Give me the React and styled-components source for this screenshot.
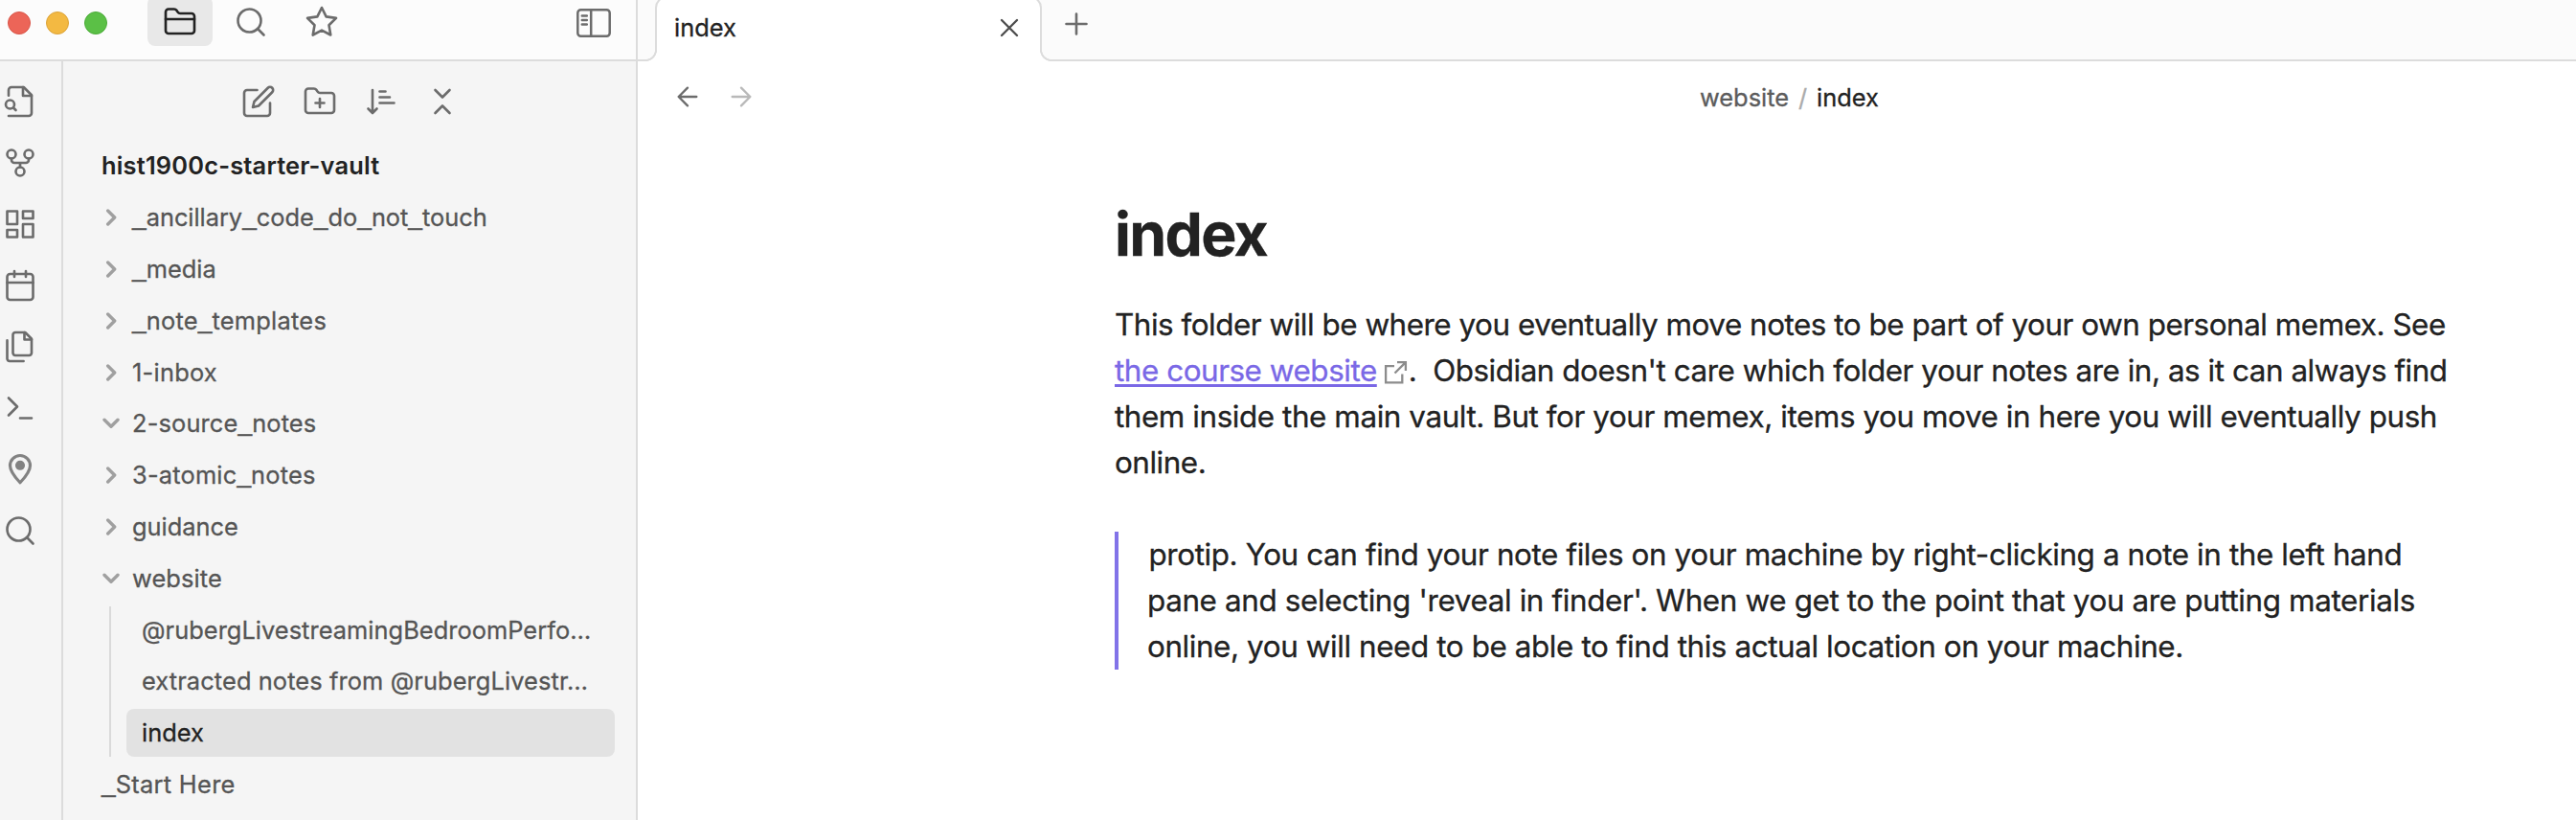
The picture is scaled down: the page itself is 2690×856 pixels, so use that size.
import React from "react";
import styled, { createGlobalStyle, css } from "styled-components";

const Global = createGlobalStyle`
  * { box-sizing: border-box; }
  body {
    margin: 0;
    overflow: hidden;
    background: #ffffff;
    color: #222222;
    font-family: Inter, "Liberation Sans", sans-serif;
    font-weight: 400;
    -webkit-font-smoothing: antialiased;
    -webkit-text-stroke: 0.3px currentColor;
  }
`;

const line = "#dcdcdc";

const Window = styled.div`
  display: flex;
  width: 2690px;
  height: 856px;
  overflow: hidden;
`;

const LeftDock = styled.section`
  display: flex;
  flex-direction: column;
  flex: none;
  width: 666px;
  border-right: 2px solid ${line};
  background: #f5f5f5;
`;

const TitleBar = styled.header`
  display: flex;
  flex: none;
  height: 64px;
  padding: 0 26px 0 8px;
  border-bottom: 2px solid ${line};
  background: #fcfcfc;
`;

const Lights = styled.div`
  display: flex;
  gap: 16px;
  margin: 12px 42px 0 0;
`;

const Light = styled.span`
  width: 24px;
  height: 24px;
  border: 1px solid ${(p) => p.$ring};
  border-radius: 50%;
  background: ${(p) => p.$fill};
`;

const DockTabs = styled.nav`
  display: flex;
  flex: 1;
  gap: 6px;
`;

const DockTab = styled.button`
  display: flex;
  align-items: center;
  justify-content: center;
  width: 68px;
  height: 52px;
  margin-top: -4px;
  padding: 2px 0 0;
  border: 0;
  border-radius: 8px;
  background: ${(p) => (p.$active ? "#e8e8e8" : "transparent")};
  color: ${(p) => (p.$active ? "#222222" : "#6c6c6c")};
`;

const ToggleButton = styled.button`
  display: flex;
  height: 30px;
  margin-top: 9px;
  padding: 0;
  border: 0;
  background: none;
  color: #6c6c6c;
`;

const DockBody = styled.div`
  display: flex;
  flex: 1;
  min-height: 0;
`;

const Ribbon = styled.aside`
  display: flex;
  flex-direction: column;
  gap: 28px;
  width: 66px;
  padding: 24px 0 0 3px;
  border-right: 2px solid ${line};
  color: #6c6c6c;
`;

const Explorer = styled.div`
  flex: 1;
  min-width: 0;
  padding-right: 22px;
`;

const ExplorerTools = styled.div`
  display: flex;
  gap: 28px;
  height: 36px;
  margin: 24px 0 22.6px 186px;
  color: #6c6c6c;
`;

const Row = styled.div`
  display: flex;
  align-items: center;
  height: 53.8px;
  padding-left: ${(p) => (p.$leaf ? 40 : 41)}px;
  font-size: 25.4px;
  line-height: 34px;
  white-space: nowrap;
  color: #555555;
`;

const VaultName = styled(Row)`
  color: #222222;
  font-weight: 600;
  -webkit-text-stroke: 0;
`;

const Chevron = styled.svg`
  flex: none;
  width: 18px;
  height: 18px;
  margin-right: 13px;
  fill: none;
  stroke: #a0a0a0;
  stroke-width: 3.4;
  stroke-linecap: round;
  stroke-linejoin: round;
`;

const Track = styled.span`
  letter-spacing: ${(p) => p.$track || 0}px;
`;

const Underscore = styled.span`
  font-family: "Liberation Sans", sans-serif;
  font-size: 26.4px;
  line-height: 1;
  letter-spacing: 0;
  vertical-align: 1px;
`;

const Children = styled.div`
  margin: 1.9px 0 1.9px 48px;
  padding-left: 16px;
  border-left: 2px solid #dadada;
`;

const FileRow = styled.div`
  display: flex;
  align-items: center;
  height: 50px;
  margin-bottom: 3.8px;
  padding-left: 16px;
  border-radius: 8px;
  font-size: 25.4px;
  line-height: 34px;
  white-space: nowrap;
  color: #555555;
  ${(p) =>
    p.$selected &&
    css`
      margin-bottom: 0;
      background: #e2e2e2;
      color: #222222;
    `}
`;

const Main = styled.main`
  flex: 1;
  min-width: 0;
`;

const TabBar = styled.div`
  display: flex;
  height: 64px;
  padding-left: 18px;
  border-bottom: 2px solid ${line};
  background: #fbfbfb;
`;

const Tab = styled.div`
  position: relative;
  display: flex;
  align-items: center;
  justify-content: space-between;
  width: 404px;
  height: 68px;
  margin-top: -4px;
  padding: 0 16px 5px 18px;
  border: 2px solid ${line};
  border-bottom: 0;
  border-radius: 12px 12px 0 0;
  background: #ffffff;
  font-size: 25.4px;
  color: #222222;
`;

const TabCurve = styled.span`
  position: absolute;
  bottom: 0;
  ${(p) => p.$side}: -12px;
  width: 12px;
  height: 12px;
  background: radial-gradient(
    circle at ${(p) => (p.$side === "left" ? "0" : "100%")} 0,
    #fbfbfb 9.6px, ${line} 10.2px, ${line} 11.7px, #ffffff 12.3px
  );
`;

const NewTab = styled.button`
  display: flex;
  margin: 7px 0 0 18px;
  padding: 0;
  border: 0;
  background: none;
  color: #6c6c6c;
  align-self: flex-start;
`;

const CloseButton = styled.button`
  display: flex;
  padding: 0;
  border: 0;
  background: none;
  color: #4d4d4d;
`;

const ViewHeader = styled.div`
  display: flex;
  align-items: center;
  height: 74px;
  padding-left: 36px;
`;

const NavArrow = styled.button`
  display: flex;
  margin-right: 24px;
  padding: 0;
  border: 0;
  background: none;
  color: ${(p) => (p.$off ? "#b9b9b9" : "#6c6c6c")};
`;

const Crumbs = styled.div`
  display: flex;
  margin-left: 961px;
  font-size: 25.4px;
  color: #5c5c5c;
`;

const Slash = styled.span`
  width: 29px;
  text-align: center;
  color: #ababab;
`;

const Current = styled.span`
  color: #222222;
`;

const Article = styled.article`
  width: 1920px;
  padding: 68px 0 0 498px;
`;

const Title = styled.h1`
  margin: 0;
  font-size: 62.5px;
  line-height: 77px;
  font-weight: 700;
  letter-spacing: -1.7px;
`;

const Paragraph = styled.p`
  margin: 32px 0 0;
  font-size: 31.4px;
  line-height: 48px;
`;

const Line = styled.span`
  display: block;
  white-space: pre;
  letter-spacing: ${(p) => p.$track || 0}px;
  text-indent: ${(p) => p.$indent || 0}px;
`;

const Link = styled.a`
  color: #7a68e6;
  text-decoration: underline;
  text-decoration-thickness: 3px;
  text-underline-offset: 3px;
  text-decoration-skip-ink: none;
`;

const LinkIcon = styled.svg`
  width: 25px;
  height: 25px;
  margin: 0 1px 0 7px;
  vertical-align: -3px;
  fill: none;
  stroke: #8c8c8c;
  stroke-width: 2.3;
`;

const Quote = styled.blockquote`
  margin: 48px 0 0;
  padding-left: 30px;
  border-left: 4px solid #8273e8;
  font-size: 31.4px;
  line-height: 48px;
`;

const Svg = styled.svg`
  flex: none;
  display: block;
  fill: none;
  stroke: currentColor;
  stroke-width: ${(p) => p.$stroke || 1.75};
  stroke-linecap: round;
  stroke-linejoin: round;
`;

function Icon({ size = 36, children }) {
  return (
    <Svg width={size} height={size} viewBox="0 0 24 24" aria-hidden="true">
      {children}
    </Svg>
  );
}

const SearchIcon = () => (
  <Icon>
    <circle cx="11" cy="11" r="8" />
    <path d="m21 21-4.3-4.3" />
  </Icon>
);

const folder =
  "M4 20h16a2 2 0 0 0 2-2V8a2 2 0 0 0-2-2h-7.93a2 2 0 0 1-1.66-.9l-.82-1.2A2 2 0 0 0 7.93 3H4a2 2 0 0 0-2 2v13c0 1.1.9 2 2 2Z";

function Label({ text, track }) {
  return (
    <Track $track={track}>
      {text.split(/(_)/).map((part, i) => (part === "_" ? <Underscore key={i}>_</Underscore> : part))}
    </Track>
  );
}

function Folder({ name, open, track }) {
  return (
    <Row>
      <Chevron viewBox="0 0 18 18">
        <path d={open ? "M2 5.3 9 12.3 16 5.3" : "M5.7 2 12.7 9 5.7 16"} />
      </Chevron>
      <Label text={name} track={track} />
    </Row>
  );
}

const folders = [
  { name: "_ancillary_code_do_not_touch", track: -0.03 },
  { name: "_media" },
  { name: "_note_templates", track: 0.25 },
  { name: "1-inbox", track: 0.25 },
  { name: "2-source_notes", open: true, track: 0.15 },
  { name: "3-atomic_notes", track: 0.2 },
  { name: "guidance" },
  { name: "website", open: true, track: 0.1 },
];

export default function App() {
  return (
    <Window>
      <Global />
      <LeftDock>
        <TitleBar>
          <Lights>
            <Light $fill="#ec6558" $ring="#d95548" />
            <Light $fill="#f3b942" $ring="#dca338" />
            <Light $fill="#5bc046" $ring="#4bab38" />
          </Lights>
          <DockTabs>
            <DockTab $active aria-label="Files">
              <Icon>
                <path d={folder} />
                <path d="M2 10h20" />
              </Icon>
            </DockTab>
            <DockTab aria-label="Search">
              <SearchIcon />
            </DockTab>
            <DockTab aria-label="Starred">
              <Icon>
                <path d="m12 2 3.09 6.26L22 9.27l-5 4.87 1.18 6.88L12 17.77l-6.18 3.25L7 14.14 2 9.27l6.91-1.01z" />
              </Icon>
            </DockTab>
          </DockTabs>
          <ToggleButton aria-label="Toggle sidebar">
            <Svg $stroke={2.5} width="36" height="30" viewBox="0 0 36 30">
              <rect x="1.3" y="1.3" width="33.4" height="27.4" rx="3.2" />
              <path d="M15.2 1.5v27M5.8 7.4h5M5.8 12h5M5.8 16.4h5" />
            </Svg>
          </ToggleButton>
        </TitleBar>
        <DockBody>
          <Ribbon>
            <Icon>
              <path d="M4 7.8V4a2 2 0 0 1 2-2h8.5L20 7.5V20a2 2 0 0 1-2 2H4" />
              <path d="M14 2v6h6" />
              <circle cx="5" cy="14" r="3" />
              <path d="m9 18-1.5-1.5" />
            </Icon>
            <Icon>
              <circle cx="12" cy="18" r="3" />
              <circle cx="6" cy="6" r="3" />
              <circle cx="18" cy="6" r="3" />
              <path d="M18 9v1a2 2 0 0 1-2 2H8a2 2 0 0 1-2-2V9M12 12v3" />
            </Icon>
            <Icon>
              <path d="M3 3h7v9H3zM14 3h7v5h-7zM14 12h7v9h-7zM3 16h7v5H3z" />
            </Icon>
            <Icon>
              <rect x="3" y="4" width="18" height="18" rx="2" />
              <path d="M16 2v4M8 2v4M3 10h18" />
            </Icon>
            <Icon>
              <path d="M15.5 2H8.6c-.4 0-.8.2-1.1.5-.3.3-.5.7-.5 1.1v12.8c0 .4.2.8.5 1.1.3.3.7.5 1.1.5h9.8c.4 0 .8-.2 1.1-.5.3-.3.5-.7.5-1.1V6.5L15.5 2z" />
              <path d="M3 7.6v12.8c0 .4.2.8.5 1.1.3.3.7.5 1.1.5h9.8M15 2v5h5" />
            </Icon>
            <Icon>
              <path d="m4 17 6-6-6-6M12 19h8" />
            </Icon>
            <Icon>
              <g stroke="#828282">
                <path
                  strokeWidth="2.1"
                  d="M12 21.2C9.2 18.2 5 13.8 5 9.3a7 7 0 0 1 14 0c0 4.5-4.2 8.9-7 11.9z"
                />
                <circle cx="12" cy="9.2" r="2.5" fill="#828282" />
              </g>
            </Icon>
            <SearchIcon />
          </Ribbon>
          <Explorer>
            <ExplorerTools>
              <Icon>
                <path d="M11 4H4a2 2 0 0 0-2 2v14a2 2 0 0 0 2 2h14a2 2 0 0 0 2-2v-7" />
                <path d="M18.5 2.5a2.12 2.12 0 0 1 3 3L12 15l-4 1 1-4Z" />
              </Icon>
              <Icon>
                <path d={folder} />
                <path d="M12 10v6M9 13h6" />
              </Icon>
              <Icon>
                <path d="M11 5h4M11 9h7M11 13h10M3 17l3 3 3-3M6 18V4" />
              </Icon>
              <Icon>
                <path d="m7 20 5-5 5 5M7 4l5 5 5-5" />
              </Icon>
            </ExplorerTools>
            <VaultName $leaf>
              <Label text="hist1900c-starter-vault" track={0.2} />
            </VaultName>
            {folders.map((f) => (
              <Folder key={f.name} {...f} />
            ))}
            <Children>
              <FileRow>
                <Label text="@rubergLivestreamingBedroomPerfo…" track={0.04} />
              </FileRow>
              <FileRow>
                <Label text="extracted notes from @rubergLivestr…" track={0.1} />
              </FileRow>
              <FileRow $selected>
                <Label text="index" />
              </FileRow>
            </Children>
            <Row $leaf>
              <Label text="_Start Here" track={0.3} />
            </Row>
          </Explorer>
        </DockBody>
      </LeftDock>
      <Main>
        <TabBar>
          <Tab>
            <TabCurve $side="left" />
            <Track>index</Track>
            <CloseButton aria-label="Close tab">
              <Icon size={32}>
                <path d="M18 6 6 18M6 6l12 12" />
              </Icon>
            </CloseButton>
            <TabCurve $side="right" />
          </Tab>
          <NewTab aria-label="New tab">
            <Icon>
              <path d="M12 5v14M5 12h14" />
            </Icon>
          </NewTab>
        </TabBar>
        <ViewHeader>
          <NavArrow aria-label="Back">
            <Icon size={32}>
              <path d="m12 19-7-7 7-7M19 12H5" />
            </Icon>
          </NavArrow>
          <NavArrow $off aria-label="Forward">
            <Icon size={32}>
              <path d="m12 5 7 7-7 7M5 12h14" />
            </Icon>
          </NavArrow>
          <Crumbs>
            <Track>website</Track>
            <Slash>/</Slash>
            <Current>index</Current>
          </Crumbs>
        </ViewHeader>
        <Article>
          <Title>index</Title>
          <Paragraph>
            <Line $track={-0.47}>
              This folder will be where you eventually move notes to be part of your own personal memex. See
            </Line>
            <Line $track={-0.45}>
              <Link>the course website</Link>
              <LinkIcon viewBox="0 0 25 25">
                <path d="M11 6.2H2.1V23.4H19.3V14.5M14 2.1H22.9V11M22.9 2.1 11.5 13.5" />
              </LinkIcon>
              {".  Obsidian doesn't care which folder your notes are in, as it can always find"}
            </Line>
            <Line $track={-0.42}>
              them inside the main vault. But for your memex, items you move in here you will eventually push
            </Line>
            <Line $track={-0.45}>online.</Line>
          </Paragraph>
          <Quote>
            <Line $track={-0.39} $indent={1.5}>
              protip. You can find your note files on your machine by right-clicking a note in the left hand
            </Line>
            <Line $track={-0.36}>
              pane and selecting 'reveal in finder'. When we get to the point that you are putting materials
            </Line>
            <Line $track={-0.4}>
              online, you will need to be able to find this actual location on your machine.
            </Line>
          </Quote>
        </Article>
      </Main>
    </Window>
  );
}
